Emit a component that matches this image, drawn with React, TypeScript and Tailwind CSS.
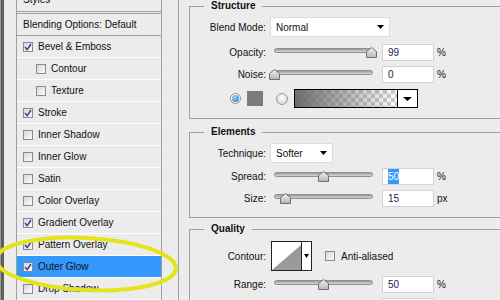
import React from 'react';

const Check = ({ checked }: { checked?: boolean }) => (
  <div className="flex h-[10px] w-[10px] shrink-0 items-center justify-center border border-[#8a8a8a] bg-gradient-to-br from-[#d8d8d8] to-[#fbfbfb]">
    {checked && (
      <svg width="8" height="8" viewBox="0 0 8 8">
        <path d="M1 4 L3.2 6.6 L7 1" fill="none" stroke="#2b3a92" strokeWidth="1.4" />
      </svg>
    )}
  </div>
);

const Arrow = ({ w = 7 }: { w?: number }) => (
  <svg width={w} height={4} viewBox={`0 0 ${w} 4`}>
    <polygon points={`0,0 ${w},0 ${w / 2},4`} fill="#000" />
  </svg>
);

const Slider = ({ pct }: { pct: number }) => (
  <div className="relative ml-[8px] h-[17px] w-[99px] shrink-0">
    <div className="mt-[4px] h-[5px] rounded-full border border-[#8f8f8f] bg-gradient-to-b from-[#9a9a9a] to-[#dadada]" />
    <svg className="absolute top-[3px]" style={{ left: pct * 0.98 - 5.5 }} width="11" height="11" viewBox="0 0 11 11">
      <defs>
        <linearGradient id="thumb" x1="0" y1="0" x2="0" y2="1">
          <stop offset="0" stopColor="#f4f4f4" />
          <stop offset="1" stopColor="#b4b4b4" />
        </linearGradient>
      </defs>
      <polygon points="0.5,4.5 5.5,0.5 10.5,4.5 10.5,10.5 0.5,10.5" fill="url(#thumb)" stroke="#6f6f6f" />
    </svg>
  </div>
);

const Field = ({ children }: { children: React.ReactNode }) => (
  <div className="ml-[9px] flex h-[17px] w-[52px] shrink-0 items-center border border-[#d2d2d2] bg-white pl-[5px] text-[#1a1f4a]">
    {children}
  </div>
);

const SliderRow = ({ label, pct, value, unit = '%', selected, className = '' }: { label: string; pct: number; value: string; unit?: string; selected?: boolean; className?: string }) => (
  <div className={`flex h-[17px] items-center ${className}`}>
    <div className="w-[76px] shrink-0 text-right">{label}</div>
    <Slider pct={pct} />
    <Field>{selected ? <span className="bg-[#3399ff] text-white">{value}</span> : value}</Field>
    <span className="ml-[3px]">{unit}</span>
  </div>
);

const Group = ({ title, className = '', children }: { title: string; className?: string; children: React.ReactNode }) => (
  <fieldset className={`w-[330px] shrink-0 border border-[#a0a0a0] pb-[10px] ${className}`}>
    <legend className="ml-[14px] px-[7px] text-[10px] font-bold leading-[12px]">{title}</legend>
    {children}
  </fieldset>
);

const styles = [
  { label: 'Bevel & Emboss', checked: true },
  { label: 'Contour', sub: true },
  { label: 'Texture', sub: true },
  { label: 'Stroke', checked: true },
  { label: 'Inner Shadow' },
  { label: 'Inner Glow' },
  { label: 'Satin' },
  { label: 'Color Overlay' },
  { label: 'Gradient Overlay', checked: true },
  { label: 'Pattern Overlay', checked: true },
  { label: 'Outer Glow', checked: true, active: true },
  { label: 'Drop Shadow' },
];

export default function App() {
  return (
    <div className="relative flex h-[300px] w-[500px] overflow-hidden bg-[#ececec] font-['Liberation_Sans',Arial,sans-serif] text-[10px] text-[#111]">
      <div className="w-[4px] shrink-0 border-l border-[#9a9a9a] bg-[#5c6259]" />
      <div className="w-[12px] shrink-0" />

      {/* Styles list */}
      <div className="w-[146px] shrink-0 border-x border-[#a0a0a0]">
        <div className="h-[12px] overflow-hidden border-b border-[#a0a0a0] pl-[6px]">
          <div className="-mt-[6px] leading-[12px]">Styles</div>
        </div>
        <div className="mt-[1px] flex h-[23px] items-center border-y border-[#a0a0a0] pl-[6px]">
          Blending Options: Default
        </div>
        {styles.map(s => (
          <div
            key={s.label}
            className={`flex h-[22px] items-center gap-[5px] border-b border-white ${s.sub ? 'pl-[19px]' : 'pl-[6px]'} ${s.active ? 'bg-[#3399ff]' : ''}`}
          >
            <Check checked={s.checked} />
            <span className="-mt-[1px]">{s.label}</span>
          </div>
        ))}
      </div>

      <div className="w-[16px] shrink-0" />

      {/* Settings */}
      <div className="flex flex-1 flex-col overflow-hidden border-l border-[#a0a0a0] pl-[10px]">
        <Group title="Structure">
          <div className="mt-[5px] flex h-[20px] items-center">
            <div className="w-[76px] shrink-0 text-right">Blend Mode:</div>
            <div className="ml-[4px] flex h-[20px] w-[120px] items-center justify-between border border-[#dcdcdc] bg-white pl-[5px] pr-[5px]">
              <span>Normal</span>
              <Arrow />
            </div>
          </div>
          <SliderRow className="mt-[7px]" label="Opacity:" pct={99} value="99" />
          <SliderRow className="mt-[5px]" label="Noise:" pct={0} value="0" />
          <div className="mt-[6px] flex h-[19px] items-center pl-[40px]">
            <div className="flex h-[11px] w-[11px] shrink-0 items-center justify-center rounded-full border border-[#8a8a8a] bg-white">
              <div className="h-[7px] w-[7px] rounded-full bg-[radial-gradient(circle_at_40%_35%,#9fd8ff,#1565b0)]" />
            </div>
            <div className="ml-[6px] h-[15px] w-[16px] shrink-0 bg-[#7b7b7b]" />
            <div className="ml-[13px] h-[12px] w-[12px] shrink-0 rounded-full border border-[#9a9a9a] bg-[radial-gradient(circle_at_50%_40%,#ffffff,#cdcdcd)]" />
            <div className="ml-[6px] flex h-[19px] w-[124px] shrink-0 border border-black bg-white">
              <svg width="102" height="17" viewBox="0 0 102 17">
                <defs>
                  <pattern id="chk" width="8" height="8" patternUnits="userSpaceOnUse">
                    <rect width="8" height="8" fill="#fff" />
                    <rect width="4" height="4" fill="#cccccc" />
                    <rect x="4" y="4" width="4" height="4" fill="#cccccc" />
                  </pattern>
                  <linearGradient id="fade" x1="0" y1="0" x2="1" y2="0">
                    <stop offset="0" stopColor="#6c6c6c" stopOpacity="1" />
                    <stop offset="1" stopColor="#6c6c6c" stopOpacity="0" />
                  </linearGradient>
                </defs>
                <rect width="102" height="17" fill="url(#chk)" />
                <rect width="102" height="17" fill="url(#fade)" />
              </svg>
              <div className="flex flex-1 items-center justify-center border-l border-black">
                <Arrow w={9} />
              </div>
            </div>
          </div>
        </Group>

        <Group title="Elements" className="mt-[7px]">
          <div className="mt-[5px] flex h-[20px] items-center">
            <div className="w-[76px] shrink-0 text-right">Technique:</div>
            <div className="ml-[4px] flex h-[20px] w-[63px] items-center justify-between border border-[#dcdcdc] bg-white pl-[5px] pr-[5px]">
              <span>Softer</span>
              <Arrow />
            </div>
          </div>
          <SliderRow className="mt-[5px]" label="Spread:" pct={50} value="50" selected />
          <SliderRow className="mt-[5px]" label="Size:" pct={12} value="15" unit="px" />
        </Group>

        <Group title="Quality" className="mt-[5px]">
          <div className="mt-[6px] flex h-[30px] items-center">
            <div className="w-[76px] shrink-0 text-right">Contour:</div>
            <div className="ml-[5px] flex h-[30px] w-[41px] shrink-0 border border-[#222] bg-white">
              <svg width="29" height="28" viewBox="0 0 29 28">
                <polygon points="0,28 29,3 29,28" fill="#9a9a9a" />
              </svg>
              <div className="flex flex-1 items-center justify-center border-l border-[#222]">
                <Arrow w={5} />
              </div>
            </div>
            <div className="ml-[13px]">
              <Check />
            </div>
            <span className="ml-[6px]">Anti-aliased</span>
          </div>
          <SliderRow className="mt-[5px]" label="Range:" pct={50} value="50" />
          <SliderRow className="mt-[5px]" label="Jitter:" pct={0} value="0" />
        </Group>
      </div>

      {/* annotation */}
      <svg className="pointer-events-none absolute left-0 top-0" width="500" height="300" viewBox="0 0 500 300">
        <ellipse cx="86" cy="264" rx="90" ry="26" transform="rotate(3 86 264)" fill="none" stroke="#e4e41c" strokeWidth="4" />
      </svg>
    </div>
  );
}
